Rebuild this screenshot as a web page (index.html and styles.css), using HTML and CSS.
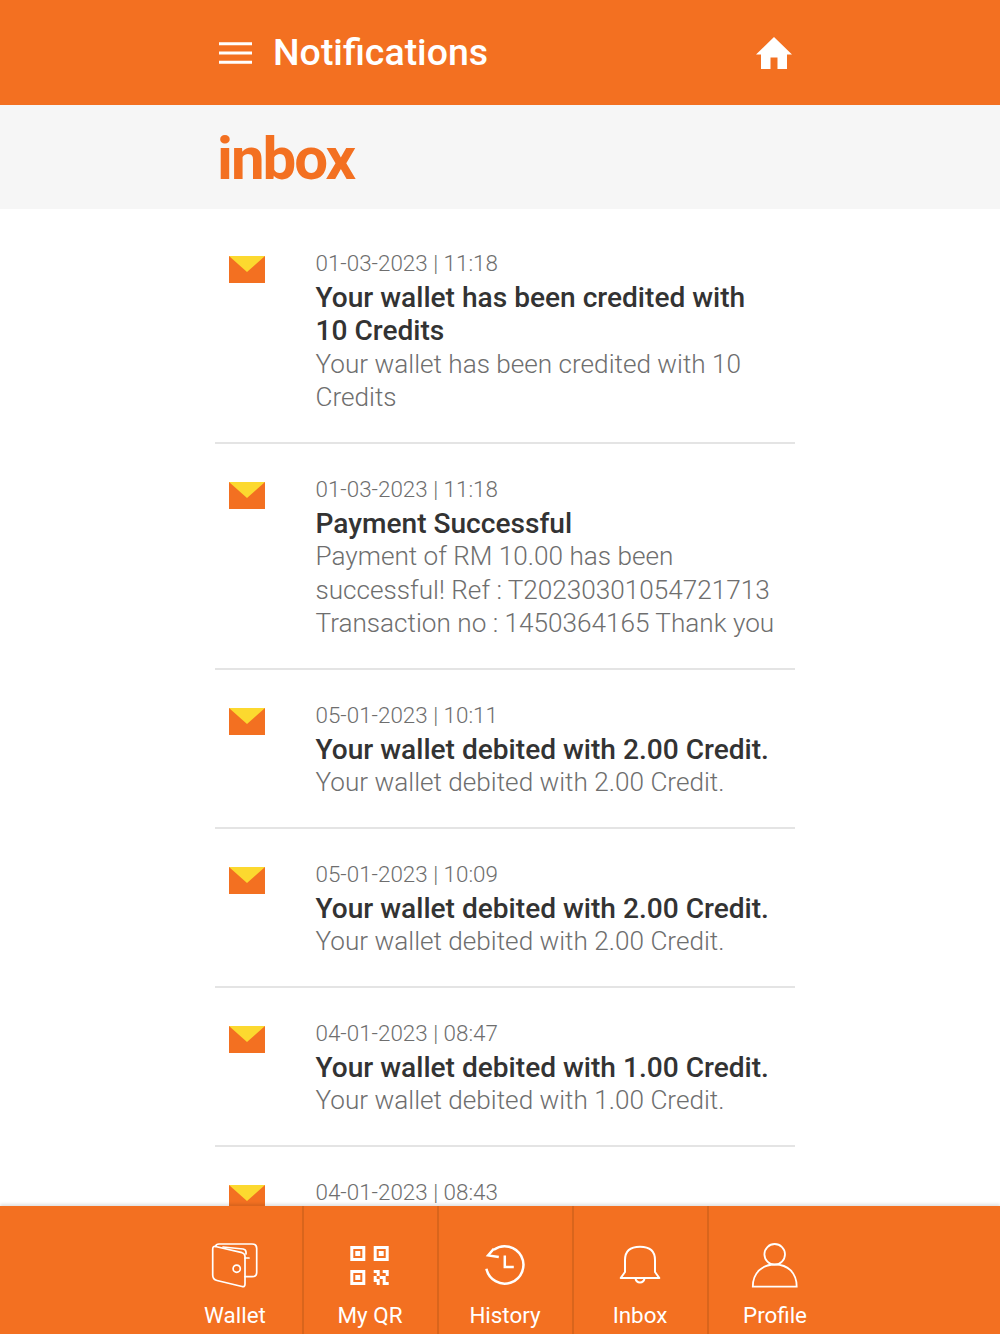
FILE: index.html
```html
<!DOCTYPE html>
<html lang="en">
<head>
<meta charset="utf-8">
<title>Notifications</title>
<link rel="stylesheet" href="styles.css">
</head>
<body>
<div class="app">
  <header class="topbar">
    <div class="wrap topbar-row">
      <svg class="menu-icon" viewBox="0 0 34 22" aria-hidden="true"><path d="M0 1.500h34M0 11h34M0 20.500h34" fill="none" stroke="#fff" stroke-width="3"/></svg>
      <h1 class="title">Notifications</h1>
      <svg class="home-icon" viewBox="0 0 36 32" aria-hidden="true"><path fill="#fff" d="M18 0 36 17.500H31V32H21.500V20.500H14.500V32H5V17.500H0Z"/></svg>
    </div>
  </header>
  <section class="band">
    <div class="wrap"><h2 class="inbox">inbox</h2></div>
  </section>
  <main class="list">
    <div class="wrap">
      <article class="item">
        <svg class="env" viewBox="0 0 36 27"><rect width="36" height="27" fill="#f37021"/><path d="M0 0h36L18 16Z" fill="#fcd92f"/></svg>
        <div class="body"><p class="date">01-03-2023 | 11:18</p><p class="head">Your wallet has been credited with 10 Credits</p><p class="msg">Your wallet has been credited with 10 Credits</p></div>
      </article>
      <article class="item">
        <svg class="env" viewBox="0 0 36 27"><rect width="36" height="27" fill="#f37021"/><path d="M0 0h36L18 16Z" fill="#fcd92f"/></svg>
        <div class="body"><p class="date">01-03-2023 | 11:18</p><p class="head">Payment Successful</p><p class="msg">Payment of RM 10.00 has been successful! Ref : T20230301054721713 Transaction no : 1450364165 Thank you</p></div>
      </article>
      <article class="item">
        <svg class="env" viewBox="0 0 36 27"><rect width="36" height="27" fill="#f37021"/><path d="M0 0h36L18 16Z" fill="#fcd92f"/></svg>
        <div class="body"><p class="date">05-01-2023 | 10:11</p><p class="head">Your wallet debited with 2.00 Credit.</p><p class="msg">Your wallet debited with 2.00 Credit.</p></div>
      </article>
      <article class="item">
        <svg class="env" viewBox="0 0 36 27"><rect width="36" height="27" fill="#f37021"/><path d="M0 0h36L18 16Z" fill="#fcd92f"/></svg>
        <div class="body"><p class="date">05-01-2023 | 10:09</p><p class="head">Your wallet debited with 2.00 Credit.</p><p class="msg">Your wallet debited with 2.00 Credit.</p></div>
      </article>
      <article class="item">
        <svg class="env" viewBox="0 0 36 27"><rect width="36" height="27" fill="#f37021"/><path d="M0 0h36L18 16Z" fill="#fcd92f"/></svg>
        <div class="body"><p class="date">04-01-2023 | 08:47</p><p class="head">Your wallet debited with 1.00 Credit.</p><p class="msg">Your wallet debited with 1.00 Credit.</p></div>
      </article>
      <article class="item">
        <svg class="env" viewBox="0 0 36 27"><rect width="36" height="27" fill="#f37021"/><path d="M0 0h36L18 16Z" fill="#fcd92f"/></svg>
        <div class="body"><p class="date">04-01-2023 | 08:43</p></div>
      </article>
    </div>
  </main>
  <nav class="tabs">
    <div class="tab">
      <svg class="tab-icon" viewBox="0 0 48 48" fill="none" stroke="#fff" stroke-width="1.700" stroke-linejoin="round" stroke-linecap="round"><path d="M4.500 3.500 31 9.700Q34 10.500 34 13.500V41Q34 44.300 31 43.500L6 37.500Q1.700 36.500 1.700 32V6Q1.700 3 4.500 3.500Z"/><path d="M4.500 3.500Q5 1 8 1H41Q45.700 1 45.700 5.500V29.500Q45.700 33.700 41 33.700H34"/><path d="M12 4 32 6Q35 6.500 35 9V11"/><path d="M34 15H38"/><circle cx="25.700" cy="25.700" r="3.600"/></svg>
      <span class="tab-label">Wallet</span>
    </div>
    <div class="tab">
      <svg class="tab-icon" viewBox="0 0 48 48" aria-hidden="true"><g fill="none" stroke="#fff" stroke-width="3"><rect x="5.800" y="4.500" width="12" height="12"/><rect x="29.200" y="4.500" width="12" height="12"/><rect x="5.800" y="28.500" width="12" height="12"/></g><path fill="#fff" d="M9.300 8h5v5h-5ZM32.700 8h5v5h-5ZM9.300 32h5v5h-5Z"/><path fill="#fff" transform="translate(27.700 27)" d="M0 0h6v3H0zM9 0h6v3H9zM3 3h3v3H3zM12 3h3v3h-3zM0 6h3v3H0zM6 6h6v3H6zM0 9h6v3H0zM9 9h3v3H9zM3 12h3v3H3zM9 12h6v3H9z"/></svg>
      <span class="tab-label">My QR</span>
    </div>
    <div class="tab">
      <svg class="tab-icon" viewBox="0 0 48 48" fill="none" stroke="#fff" stroke-width="2.500"><g transform="translate(.8 .7)"><path d="M12 6A18.700 18.700 0 1 1 4.600 25"/><path d="M12 5 6.300 11.700 17 13.300"/><path d="M23 11.700V23.300H32"/></g></svg>
      <span class="tab-label">History</span>
    </div>
    <div class="tab">
      <svg class="tab-icon" viewBox="0 0 48 48" fill="none" stroke="#fff" stroke-width="2"><path d="M4.700 35 9 29V17Q9 3.700 24 3.700T39 17V29L43.300 35Z" stroke-linejoin="round"/><path d="M19.500 35.500A4.600 5 0 0 0 28.500 35.500"/></svg>
      <span class="tab-label">Inbox</span>
    </div>
    <div class="tab">
      <svg class="tab-icon" viewBox="0 0 48 48" fill="none" stroke="#fff" stroke-width="1.800"><circle cx="23.700" cy="11.300" r="10.300"/><path d="M1.800 43.700C1.800 30 11 21.500 24 21.500C37 21.500 45.700 30 45.700 43.700Z"/></svg>
      <span class="tab-label">Profile</span>
    </div>
  </nav>
</div>
</body>
</html>
```
FILE: styles.css
```css
* { box-sizing: border-box; margin: 0; padding: 0; }
html, body { height: 100%; }
body { font-family: Roboto, "Noto Sans", sans-serif; background: #fff; overflow: hidden; }
.app { display: flex; flex-direction: column; height: 100vh; }
.wrap { width: 580px; margin-left: 215px; }

.topbar { height: 105px; flex: none; background: #f37021; display: flex; align-items: center; }
.topbar-row { display: flex; align-items: center; padding: 0 3px 0 4px; }
.menu-icon { width: 33px; height: 22px; flex: none; }
.title { flex: 1; margin-left: 21px; font-size: 37.5px; font-weight: 500; color: #fff; line-height: 1; }
.home-icon { width: 36px; height: 32px; flex: none; }

.band { height: 104px; flex: none; background: #f6f6f6; display: flex; align-items: center; }
.inbox { padding: 4px 0 0 2px; font-size: 60px; font-weight: 700; letter-spacing: -2px; color: #f37021; line-height: 1; }

.list { flex: 1; min-height: 0; overflow: hidden; padding-top: 9.5px; }
.item { display: flex; padding: 28.7px 14px 27.8px 13.5px; border-bottom: 2px solid #e4e4e4; }
.env { width: 36px; height: 27px; flex: none; margin-top: 8.5px; }
.body { margin-left: 51px; flex: 1; font-size: 26.15px; line-height: 33.5px; }
.date { font-size: 22.4px; font-weight: 300; color: #6e6e6e; }
.head { font-size: 28.1px; font-weight: 500; color: #333; }
.msg { font-weight: 300; color: #6e6e6e; }

.tabs { height: 128px; flex: none; background: #f37021; display: flex; justify-content: center; padding-left: 12px; box-shadow: 0 -2px 3px rgba(0,0,0,.12); position: relative; }
.tab { width: 135px; display: flex; flex-direction: column; align-items: center; padding-top: 37px; border-right: 2px solid #d9651c; }
.tab:last-child { border-right-color: transparent; }
.tab-icon { width: 48px; height: 48px; flex: none; }
.tab-label { font-size: 22.4px; line-height: 30px; color: #fff; margin-top: 9px; }
```
